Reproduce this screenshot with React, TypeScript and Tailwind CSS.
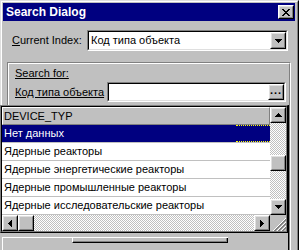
import React from 'react';

const font = "font-['Liberation_Sans',Arial,sans-serif]";
const dither =
  'bg-[repeating-conic-gradient(#c0c0c0_0_25%,#ffffff_0_50%)] bg-[length:2px_2px]';

// small pixel triangle used on scroll / combo buttons
function Arrow({ dir }: { dir: 'up' | 'down' | 'left' | 'right' }) {
  const px: React.ReactNode[] = [];
  for (let i = 0; i < 4; i++) {
    const len = 7 - i * 2;
    if (dir === 'down') px.push(<rect key={i} x={i} y={i} width={len} height={1} />);
    if (dir === 'up') px.push(<rect key={i} x={i} y={3 - i} width={len} height={1} />);
    if (dir === 'right') px.push(<rect key={i} x={i} y={i} width={1} height={len} />);
    if (dir === 'left') px.push(<rect key={i} x={3 - i} y={i} width={1} height={len} />);
  }
  const vertical = dir === 'up' || dir === 'down';
  return (
    <svg
      width={vertical ? 7 : 4}
      height={vertical ? 4 : 7}
      shapeRendering="crispEdges"
      fill="#000"
    >
      {px}
    </svg>
  );
}

function Raised({ className = '', children }: { className?: string; children?: React.ReactNode }) {
  return (
    <div
      className={`border border-t-white border-l-white border-r-black border-b-black bg-[#c0c0c0] ${className}`}
    >
      <div className="w-full h-full border border-t-[#dfdfdf] border-l-[#dfdfdf] border-r-[#808080] border-b-[#808080] flex items-center justify-center">
        {children}
      </div>
    </div>
  );
}

function Sunken({ className = '', children }: { className?: string; children?: React.ReactNode }) {
  return (
    <div
      className={`border border-t-[#808080] border-l-[#808080] border-r-white border-b-white ${className}`}
    >
      <div className="w-full h-full border border-t-black border-l-black border-r-[#dfdfdf] border-b-[#dfdfdf] bg-white flex items-center">
        {children}
      </div>
    </div>
  );
}

function CloseGlyph() {
  const px: React.ReactNode[] = [];
  for (let i = 0; i < 7; i++) {
    px.push(<rect key={`a${i}`} x={i} y={i} width={2} height={1} />);
    px.push(<rect key={`b${i}`} x={6 - i} y={i} width={2} height={1} />);
  }
  return (
    <svg width={8} height={7} shapeRendering="crispEdges" fill="#000">
      {px}
    </svg>
  );
}

function SizeGrip() {
  const lines: React.ReactNode[] = [];
  [3, 7, 11].forEach((k) => {
    lines.push(<line key={`w${k}`} x1={16} y1={k} x2={k} y2={16} stroke="#fff" />);
    lines.push(<line key={`g${k}`} x1={16} y1={k + 1} x2={k + 1} y2={16} stroke="#808080" />);
    lines.push(<line key={`h${k}`} x1={16} y1={k + 2} x2={k + 2} y2={16} stroke="#808080" />);
  });
  return (
    <svg width={16} height={16} className="bg-[#c0c0c0]">
      {lines}
    </svg>
  );
}

const rows = [
  'Ядерные реакторы',
  'Ядерные энергетические реакторы',
  'Ядерные промышленные реакторы',
  'Ядерные исследовательские реакторы',
];

function ResultGrid() {
  return (
    <div className="h-[128px] w-[288px] border border-t-[#808080] border-l-[#808080] border-r-black border-b-black">
      <div className="h-full w-full border border-t-black border-l-black border-r-[#808080] border-b-[#808080] flex">
        {/* columns + horizontal scroll */}
        <div className="flex-1 flex flex-col min-w-0">
          <div className="h-[18px] border border-t-white border-l-white border-r-[#808080] border-b-[#808080] bg-[#c0c0c0] flex items-center pl-[1px] text-[11px] text-black">
            DEVICE_TYP
          </div>
          <div className="h-[18px] flex bg-[#000080] border-b border-[#c0c0c0] text-white text-[11px]">
            <div className="flex-1 flex items-center pl-[2px]">Нет данных</div>
            <div className="w-[34px] border-y border-dotted border-[#ffff00]" />
          </div>
          {rows.map((r) => (
            <div
              key={r}
              className="h-[18px] flex items-center pl-[2px] bg-white border-b border-[#c0c0c0] text-[11px] text-black whitespace-nowrap overflow-hidden"
            >
              {r}
            </div>
          ))}
          <div className="h-[16px] flex">
            <Raised className="w-[16px] h-[16px]">
              <Arrow dir="left" />
            </Raised>
            <Raised className="w-[16px] h-[16px]" />
            <div className={`flex-1 ${dither}`} />
            <Raised className="w-[16px] h-[16px]">
              <Arrow dir="right" />
            </Raised>
          </div>
        </div>
        {/* vertical scroll */}
        <div className="w-[16px] flex flex-col">
          <Raised className="w-[16px] h-[16px]">
            <Arrow dir="up" />
          </Raised>
          <div className={`h-[32px] ${dither}`} />
          <Raised className="w-[16px] h-[16px]" />
          <div className={`flex-1 ${dither}`} />
          <Raised className="w-[16px] h-[16px]">
            <Arrow dir="down" />
          </Raised>
          <SizeGrip />
        </div>
      </div>
    </div>
  );
}

export default function App() {
  return (
    <div className={`w-[299px] h-[250px] overflow-hidden relative ${font}`}>
      {/* Dialog window */}
      <div className="w-[299px] h-[280px] border border-t-[#dfdfdf] border-l-[#dfdfdf] border-r-black border-b-black">
        <div className="h-full border border-t-white border-l-white border-r-[#808080] border-b-[#808080] bg-[#c0c0c0] pt-px pl-px pr-[2px]">
          {/* Title bar */}
          <div className="h-[18px] bg-[#000080] flex items-center justify-between pl-[3px] pr-[1px]">
            <span className="text-white text-[12px] font-bold leading-none">Search Dialog</span>
            <Raised className="w-[16px] h-[14px]">
              <CloseGlyph />
            </Raised>
          </div>

          {/* Current index */}
          <div className="mt-[9px] pl-[9px] flex items-center text-[11px] text-black">
            <div className="w-[75px]">
              <span className="underline">C</span>urrent Index:
            </div>
            <Sunken className="w-[201px] h-[21px]">
              <span className="flex-1 pl-[2px]">Код типа объекта</span>
              <Raised className="w-[16px] h-[17px]">
                <Arrow dir="down" />
              </Raised>
            </Sunken>
          </div>

          {/* Search group box */}
          <div className="mt-[11px] ml-[4px] w-[284px] h-[220px] border border-t-[#808080] border-l-[#808080] border-r-white border-b-white">
            <div className="h-full border border-t-white border-l-white border-r-[#808080] border-b-[#808080] pl-[6px] text-[11px] text-black">
              <div className="mt-[3px] h-[13px] leading-[13px] underline">Search for:</div>
              <div className="mt-[2px] flex items-center">
                <div className="w-[92px] underline">Код типа объекта</div>
                <Sunken className="w-[179px] h-[20px]">
                  <span className="flex-1" />
                  <Raised className="w-[16px] h-[16px]">
                    <span className="text-[11px] font-bold leading-none tracking-[1px] -mt-[3px]">...</span>
                  </Raised>
                </Sunken>
              </div>
            </div>
          </div>
        </div>
      </div>

      {/* Drop-down grid popup lying over the dialog */}
      <div className="absolute left-0 top-[105px] w-[289px] h-[150px] bg-[#c0c0c0] border-r border-black">
        <ResultGrid />
        <div className="mt-[4px] ml-[2px] w-[226px] h-[20px] border-t border-l border-white">
          <div className="ml-[69px] w-[156px] h-[5px] border-l border-white border-r border-b border-r-black border-b-black">
            <div className="h-full border-r border-b border-[#808080]" />
          </div>
        </div>
      </div>
    </div>
  );
}
